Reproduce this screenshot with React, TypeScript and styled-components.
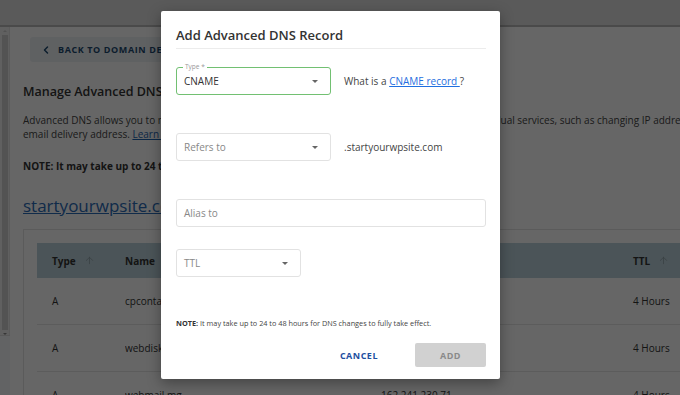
import styled, { createGlobalStyle } from "styled-components";
import { ChevronLeft, ArrowUp } from "lucide-react";

const GlobalStyle = createGlobalStyle`
  html, body {
    margin: 0;
    padding: 0;
    width: 680px;
    height: 395px;
    overflow: hidden;
    font-family: "Open Sans", "Liberation Sans", sans-serif;
  }
`;

const Screen = styled.div`
  position: relative;
  width: 680px;
  height: 395px;
  overflow: hidden;
  background: #ffffff;
  display: flex;
  flex-direction: column;
`;

const TopBand = styled.div`
  height: 25px;
  flex-shrink: 0;
  background: #e2e2e2;
  border-bottom: 2px solid #b8b8b8;
`;

const Body = styled.div`
  flex: 1;
  display: flex;
  min-height: 0;
`;

const SideRail = styled.div`
  width: 10px;
  flex-shrink: 0;
  display: flex;
  flex-direction: column;
  background: #f1f1f1;
`;

const ScrollTrack = styled.div`
  height: 305px;
  display: flex;
  flex-direction: column;
  align-items: center;
  padding-top: 3px;
  gap: 3px;
  border-right: 1px solid #e4e4e4;
`;

const ScrollArrow = styled.div<{ $down?: boolean }>`
  width: 0;
  height: 0;
  border-left: 2px solid transparent;
  border-right: 2px solid transparent;
  ${(p) => (p.$down ? "border-top: 2px solid #888;" : "border-bottom: 2px solid #ccc;")}
`;

const ScrollThumb = styled.div`
  width: 6px;
  flex: 1;
  background: #cfcfcf;
`;

const RailFoot = styled.div`
  flex: 1;
  background: #f6f8fb;
  border-top: 1px solid #ddd;
`;

const Main = styled.div`
  flex: 1;
  padding: 10px 0 0 13px;
  min-width: 0;
  color: #333;
`;

const BackButton = styled.div`
  display: inline-flex;
  align-items: center;
  gap: 6px;
  height: 25px;
  margin-left: 7px;
  padding: 0 14px 0 10px;
  background: #eef2f6;
  border-radius: 3px;
  color: #1d4a70;
  font-size: 9px;
  font-weight: 700;
  letter-spacing: 0.6px;
  white-space: nowrap;
`;

const PageTitle = styled.h1`
  margin: 21px 0 0;
  font-size: 12.5px;
  font-weight: 600;
  color: #333;
`;

const Paragraph = styled.p`
  margin: 13px 0 0;
  font-size: 10px;
  line-height: 14px;
  color: #444;
  white-space: nowrap;
`;

const Line = styled.span`
  display: block;
`;

const InlineLink = styled.a`
  color: #1e63b0;
  text-decoration: underline;
`;

const PageNote = styled.p`
  margin: 18px 0 0;
  font-size: 10px;
  font-weight: 700;
  color: #333;
  white-space: nowrap;
`;

const DomainLink = styled.a`
  display: block;
  margin-top: 21px;
  font-size: 17px;
  color: #2a6bb8;
  text-decoration: underline;
`;

const TableCard = styled.div`
  margin-top: 12px;
  width: 720px;
  border: 1px solid #e3e3e3;
  border-right: none;
  padding: 13px 0 0 13px;
`;

const HeadRow = styled.div`
  display: grid;
  grid-template-columns: 73px 256px 252px 1fr;
  align-items: center;
  height: 35px;
  padding-left: 15px;
  background: #bcd2dc;
  font-size: 10px;
  font-weight: 700;
  color: #333;
`;

const HeadCell = styled.div`
  display: flex;
  align-items: center;
  gap: 8px;
`;

const SortIcon = styled(ArrowUp)`
  color: #8a9aa2;
`;

const DataRow = styled.div`
  display: grid;
  grid-template-columns: 73px 256px 252px 1fr;
  align-items: center;
  height: 46px;
  padding-left: 15px;
  border-bottom: 1px solid #e6e6e6;
  font-size: 10px;
  color: #333;

  &:first-child {
    height: 35px;
  }
`;

const NameCell = styled.span`
  max-width: 57px;
  overflow: hidden;
  white-space: nowrap;
`;

const Overlay = styled.div`
  position: absolute;
  inset: 0;
  background: rgba(0, 0, 0, 0.6);
  padding: 11px 0 0 161px;
`;

const Dialog = styled.div`
  width: 339px;
  height: 368px;
  box-sizing: border-box;
  background: #fff;
  border-radius: 2px;
  box-shadow: 0 4px 14px rgba(0, 0, 0, 0.35);
  padding: 15px 14px 0 15px;
  color: #333;
`;

const DialogTitle = styled.h2`
  margin: 0;
  padding-bottom: 4px;
  font-size: 13px;
  font-weight: 600;
  color: #333;
  border-bottom: 1px solid #ececec;
`;

const FieldRow = styled.div<{ $top: number }>`
  display: flex;
  align-items: center;
  gap: 13px;
  margin-top: ${(p) => p.$top}px;
`;

const SelectBox = styled.div<{ $width: number; $active?: boolean }>`
  position: relative;
  box-sizing: border-box;
  width: ${(p) => p.$width}px;
  height: 28px;
  display: flex;
  align-items: center;
  justify-content: space-between;
  padding: 0 12px 0 7px;
  border: 1px solid ${(p) => (p.$active ? "#72c072" : "#e2e2e2")};
  border-radius: 3px;
  font-size: 10px;
  color: ${(p) => (p.$active ? "#333" : "#888")};
`;

const FloatLabel = styled.span`
  position: absolute;
  top: -5px;
  left: 6px;
  padding: 0 2px;
  background: #fff;
  font-size: 6.5px;
  line-height: 8px;
  color: #999;
`;

const Caret = styled.span`
  width: 0;
  height: 0;
  border-left: 3px solid transparent;
  border-right: 3px solid transparent;
  border-top: 3px solid #666;
`;

const TextInput = styled.div`
  box-sizing: border-box;
  width: 310px;
  height: 28px;
  display: flex;
  align-items: center;
  padding: 0 7px;
  border: 1px solid #e2e2e2;
  border-radius: 3px;
  font-size: 10px;
  color: #888;
`;

const SideText = styled.span`
  font-size: 10px;
  color: #444;
`;

const HelpLink = styled.a`
  color: #1f6fe0;
  text-decoration: underline;
`;

const DialogNote = styled.p`
  margin: 41px 0 0;
  font-size: 7.3px;
  color: #444;
  white-space: nowrap;

  b {
    font-weight: 700;
    color: #333;
  }
`;

const Actions = styled.div`
  display: flex;
  justify-content: flex-end;
  align-items: center;
  gap: 37px;
  margin-top: 15px;
`;

const TextButton = styled.button`
  border: none;
  background: none;
  padding: 0;
  font-family: inherit;
  font-size: 9px;
  font-weight: 700;
  letter-spacing: 0.5px;
  color: #1e4f9f;
`;

const FilledButton = styled.button`
  width: 71px;
  height: 24px;
  border: none;
  border-radius: 2px;
  background: #d1d1d1;
  font-family: inherit;
  font-size: 9px;
  font-weight: 700;
  letter-spacing: 0.5px;
  color: #8a8a8a;
`;

const rows = [
  { type: "A", name: "cpcontacts", value: "162.241.230.71", ttl: "4 Hours" },
  { type: "A", name: "webdisk", value: "162.241.230.71", ttl: "4 Hours" },
  { type: "A", name: "webmail.mg", value: "162.241.230.71", ttl: "4 Hours" },
];

export default function App() {
  return (
    <>
      <GlobalStyle />
      <Screen>
        <TopBand />
        <Body>
          <SideRail>
            <ScrollTrack>
              <ScrollArrow />
              <ScrollThumb />
              <ScrollArrow $down />
            </ScrollTrack>
            <RailFoot />
          </SideRail>
          <Main>
            <BackButton>
              <ChevronLeft size={12} strokeWidth={3} />
              BACK TO DOMAIN DETAILS
            </BackButton>
            <PageTitle>Manage Advanced DNS Records</PageTitle>
            <Paragraph>
              <Line>
                Advanced DNS allows you to manage the records that connect your domain and subdomains to individual services, such as changing IP addresses or a custom
              </Line>
              <Line>
                email delivery address. <InlineLink>Learn more</InlineLink>
              </Line>
            </Paragraph>
            <PageNote>NOTE: It may take up to 24 to 48 hours for DNS changes to fully take effect.</PageNote>
            <DomainLink>startyourwpsite.com</DomainLink>
            <TableCard>
              <HeadRow>
                <HeadCell>
                  Type <SortIcon size={11} strokeWidth={1.5} />
                </HeadCell>
                <HeadCell>Name</HeadCell>
                <HeadCell>Value</HeadCell>
                <HeadCell>
                  TTL <SortIcon size={11} strokeWidth={1.5} />
                </HeadCell>
              </HeadRow>
              {rows.map((r) => (
                <DataRow key={r.name}>
                  <span>{r.type}</span>
                  <NameCell>{r.name}</NameCell>
                  <span>{r.value}</span>
                  <span>{r.ttl}</span>
                </DataRow>
              ))}
            </TableCard>
          </Main>
        </Body>
        <Overlay>
          <Dialog>
            <DialogTitle>Add Advanced DNS Record</DialogTitle>
            <FieldRow $top={18}>
              <SelectBox $width={155} $active>
                <FloatLabel>Type *</FloatLabel>
                CNAME
                <Caret />
              </SelectBox>
              <SideText>
                What is a <HelpLink>CNAME record </HelpLink>?
              </SideText>
            </FieldRow>
            <FieldRow $top={38}>
              <SelectBox $width={155}>
                Refers to
                <Caret />
              </SelectBox>
              <SideText>.startyourwpsite.com</SideText>
            </FieldRow>
            <FieldRow $top={38}>
              <TextInput>Alias to</TextInput>
            </FieldRow>
            <FieldRow $top={22}>
              <SelectBox $width={125}>
                TTL
                <Caret />
              </SelectBox>
            </FieldRow>
            <DialogNote>
              <b>NOTE:</b> It may take up to 24 to 48 hours for DNS changes to fully take effect.
            </DialogNote>
            <Actions>
              <TextButton>CANCEL</TextButton>
              <FilledButton>ADD</FilledButton>
            </Actions>
          </Dialog>
        </Overlay>
      </Screen>
    </>
  );
}
